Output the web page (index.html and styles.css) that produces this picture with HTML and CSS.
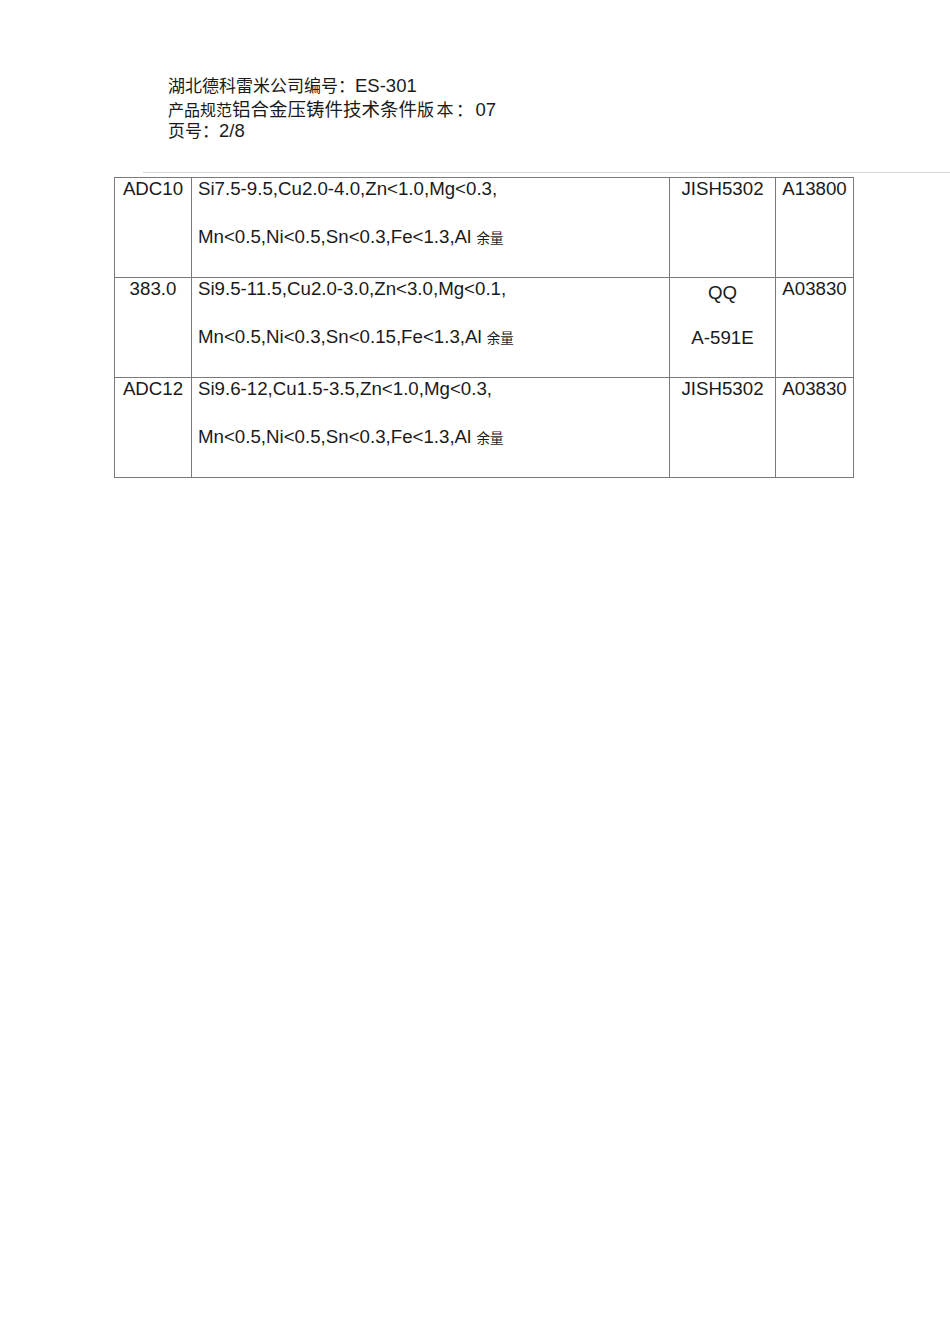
FILE: index.html
```html
<!DOCTYPE html>
<html lang="zh-CN">
<head>
<meta charset="utf-8">
<title>产品规范</title>
<link rel="stylesheet" href="styles.css">
</head>
<body>
<header class="doc-head">
  <div class="head-line"><span class="zh zh17">湖北德科雷米公司编号：</span>ES-301</div>
  <div class="head-line"><span class="zh zh16">产品规范</span><span class="zh zh185">铝合金压铸件技术条件</span><span class="zh zhv">版本：</span>07</div>
  <div class="head-line"><span class="zh zh17">页号：</span>2/8</div>
</header>
<div class="rule"></div>
<table class="spec">
  <colgroup>
    <col class="c1"><col class="c2"><col class="c3"><col class="c4">
  </colgroup>
  <tbody>
    <tr>
      <td class="center"><div class="ln">ADC10</div></td>
      <td class="left"><div class="ln">Si7.5-9.5,Cu2.0-4.0,Zn&lt;1.0,Mg&lt;0.3,</div><div class="ln ln2">Mn&lt;0.5,Ni&lt;0.5,Sn&lt;0.3,Fe&lt;1.3,Al <span class="zh zh13">余量</span></div></td>
      <td class="center"><div class="ln">JISH5302</div></td>
      <td class="center"><div class="ln">A13800</div></td>
    </tr>
    <tr>
      <td class="center"><div class="ln">383.0</div></td>
      <td class="left"><div class="ln">Si9.5-11.5,Cu2.0-3.0,Zn&lt;3.0,Mg&lt;0.1,</div><div class="ln ln2">Mn&lt;0.5,Ni&lt;0.3,Sn&lt;0.15,Fe&lt;1.3,Al <span class="zh zh13">余量</span></div></td>
      <td class="center"><div class="ln low">QQ</div><div class="ln ln3">A-591E</div></td>
      <td class="center"><div class="ln">A03830</div></td>
    </tr>
    <tr>
      <td class="center"><div class="ln">ADC12</div></td>
      <td class="left"><div class="ln">Si9.6-12,Cu1.5-3.5,Zn&lt;1.0,Mg&lt;0.3,</div><div class="ln ln2">Mn&lt;0.5,Ni&lt;0.5,Sn&lt;0.3,Fe&lt;1.3,Al <span class="zh zh13">余量</span></div></td>
      <td class="center"><div class="ln">JISH5302</div></td>
      <td class="center"><div class="ln">A03830</div></td>
    </tr>
  </tbody>
</table>
</body>
</html>
```
FILE: styles.css
```css
html, body {
  margin: 0;
  padding: 0;
  background: #fff;
}
body {
  font-family: "Liberation Sans", "Noto Sans CJK SC", Arial, sans-serif;
  color: #1a1a1a;
  width: 950px;
  height: 1344px;
}
.zh {
  font-family: "Noto Sans CJK SC", "Liberation Sans", sans-serif;
  display: inline-block;
  line-height: 20px;
}
.zh17 { font-size: 17px; }
.zh16 { font-size: 16px; }
.zh185 { font-size: 18.5px; }
.zhv { font-size: 17px; letter-spacing: 2.5px; }
.zh13 { font-size: 13.5px; }

.doc-head {
  padding: 75px 0 0 168px;
  font-size: 18.5px;
}
.head-line {
  height: 22.5px;
  line-height: 22.5px;
  white-space: nowrap;
}
.rule {
  margin: 29px 0 0 143px;
  height: 1px;
  background: #d6d6d6;
}
.spec {
  margin: 4px 0 0 114px;
  border-collapse: collapse;
  table-layout: fixed;
  width: 739px;
  font-size: 18.7px;
}
.c1 { width: 77px; }
.c2 { width: 478px; }
.c3 { width: 106px; }
.c4 { width: 78px; }
.spec tr { height: 100px; }
.spec td {
  border: 1px solid #7a7a7a;
  vertical-align: top;
  padding: 0;
  white-space: nowrap;
}
.spec td.center { text-align: center; }
.spec td.left { padding-left: 6px; }
.ln {
  height: 22px;
  line-height: 22px;
}
.ln2 { margin-top: 26px; }
.low { margin-top: 4px; }
.ln3 { margin-top: 23px; }
```
